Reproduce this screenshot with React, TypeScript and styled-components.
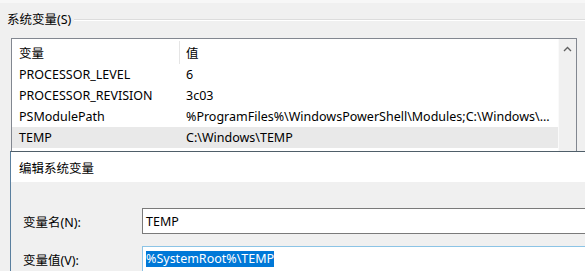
import React from "react";
import styled, { createGlobalStyle } from "styled-components";

const Global = createGlobalStyle`
  html, body { margin: 0; padding: 0; background: #f0f0f0; }
  body { font-family: "Noto Sans", "Noto Sans CJK SC", sans-serif; font-size: 12px; color: #000; }
`;

const Screen = styled.div`
  position: relative;
  width: 585px;
  height: 271px;
  overflow: hidden;
  background: #f0f0f0;
  border-top: 3px solid #f7f7f7;
  box-sizing: border-box;
`;

const GroupHead = styled.div`
  display: flex;
  align-items: center;
  gap: 3px;
  height: 22px;
  margin-top: 6px;
  padding-left: 7px;
`;

const GroupLabel = styled.span`
  font-size: 12.5px;
  line-height: 22px;
  white-space: nowrap;
`;

const GroupRule = styled.div`
  flex: 1;
  height: 1px;
  background: #dcdcdc;
  border-bottom: 1px solid #ffffff;
`;

const ListBox = styled.div`
  display: flex;
  margin: 7px 0 0 11px;
  width: 566px;
  height: 140px;
  border: 1px solid #828790;
  border-bottom: none;
  background: #fff;
  box-sizing: border-box;
`;

const ListBody = styled.div`
  flex: 1;
  display: flex;
  flex-direction: column;
`;

const Row = styled.div<{ $head?: boolean; $sel?: boolean }>`
  display: grid;
  grid-template-columns: 168px 1fr;
  height: ${(p) => (p.$head ? 25 : 21)}px;
  align-items: center;
  background: ${(p) => (p.$sel ? "#e9e9e9" : "#fff")};
  white-space: nowrap;
  overflow: hidden;
`;

const Cell = styled.div<{ $div?: boolean }>`
  height: 100%;
  display: flex;
  align-items: center;
  padding-left: ${(p) => (p.$div ? 6 : 7)}px;
  box-sizing: border-box;
  font-size: 12.5px;
  overflow: hidden;
`;

const HeadCell = styled(Cell)<{ $first?: boolean }>`
  border-right: ${(p) => (p.$first ? "1px solid #e5e5e5" : "none")};
  height: 23px;
  margin-top: 2px;
`;

const ScrollBar = styled.div`
  width: 17px;
  background: #f0f0f0;
  border-left: 1px solid #fafafa;
  display: flex;
  flex-direction: column;
  align-items: center;
`;

const ArrowBox = styled.div`
  height: 17px;
  width: 17px;
  margin-top: 1px;
  display: flex;
  align-items: center;
  justify-content: center;
`;

const Track = styled.div`
  flex: 1;
`;

const Thumb = styled.div`
  width: 15px;
  height: 22px;
  background: #cdcdcd;
`;

const Dialog = styled.div`
  position: absolute;
  left: 10px;
  top: 148px;
  width: 600px;
  height: 140px;
  border-left: 1px solid #5a7f9e;
  border-top: 1px solid #4f5e69;
  background: #f0f0f0;
`;

const TitleBar = styled.div`
  height: 30px;
  background: #fff;
  display: flex;
  align-items: center;
  padding-left: 8px;
  font-size: 12.5px;
`;

const Form = styled.div`
  display: flex;
  flex-direction: column;
  gap: 12px;
  padding: 26px 0 0 12px;
`;

const Field = styled.div`
  display: grid;
  grid-template-columns: 119px 1fr;
  align-items: center;
`;

const Label = styled.label`
  font-size: 12.5px;
`;

const Input = styled.div<{ $focus?: boolean }>`
  height: 26px;
  box-sizing: border-box;
  border: 1px solid ${(p) => (p.$focus ? "#8cc4e6" : "#7a7a7a")};
  background: #fff;
  display: flex;
  align-items: center;
  padding-left: 3px;
  font-size: 12.5px;
`;

const Selected = styled.span`
  background: #0078d7;
  color: #fff;
  line-height: 16px;
`;

const rows: [string, string][] = [
  ["PROCESSOR_LEVEL", "6"],
  ["PROCESSOR_REVISION", "3c03"],
  ["PSModulePath", "%ProgramFiles%\\WindowsPowerShell\\Modules;C:\\Windows\\..."],
  ["TEMP", "C:\\Windows\\TEMP"],
];

export default function App() {
  return (
    <>
      <Global />
      <Screen>
        <GroupHead>
          <GroupLabel>系统变量(S)</GroupLabel>
          <GroupRule />
        </GroupHead>
        <ListBox>
          <ListBody>
            <Row $head>
              <HeadCell $first>变量</HeadCell>
              <HeadCell $div>值</HeadCell>
            </Row>
            {rows.map(([k, v], i) => (
              <Row key={k} $sel={i === rows.length - 1}>
                <Cell>{k}</Cell>
                <Cell $div>{v}</Cell>
              </Row>
            ))}
          </ListBody>
          <ScrollBar>
            <ArrowBox>
              <svg width="9" height="6" viewBox="0 0 9 6">
                <path d="M1 5 L4.5 1.5 L8 5" fill="none" stroke="#606060" strokeWidth="1.3" />
              </svg>
            </ArrowBox>
            <Track />
            <Thumb />
          </ScrollBar>
        </ListBox>
        <Dialog>
          <TitleBar>编辑系统变量</TitleBar>
          <Form>
            <Field>
              <Label>变量名(N):</Label>
              <Input>TEMP</Input>
            </Field>
            <Field>
              <Label>变量值(V):</Label>
              <Input $focus>
                <Selected>%SystemRoot%\TEMP</Selected>
              </Input>
            </Field>
          </Form>
        </Dialog>
      </Screen>
    </>
  );
}
